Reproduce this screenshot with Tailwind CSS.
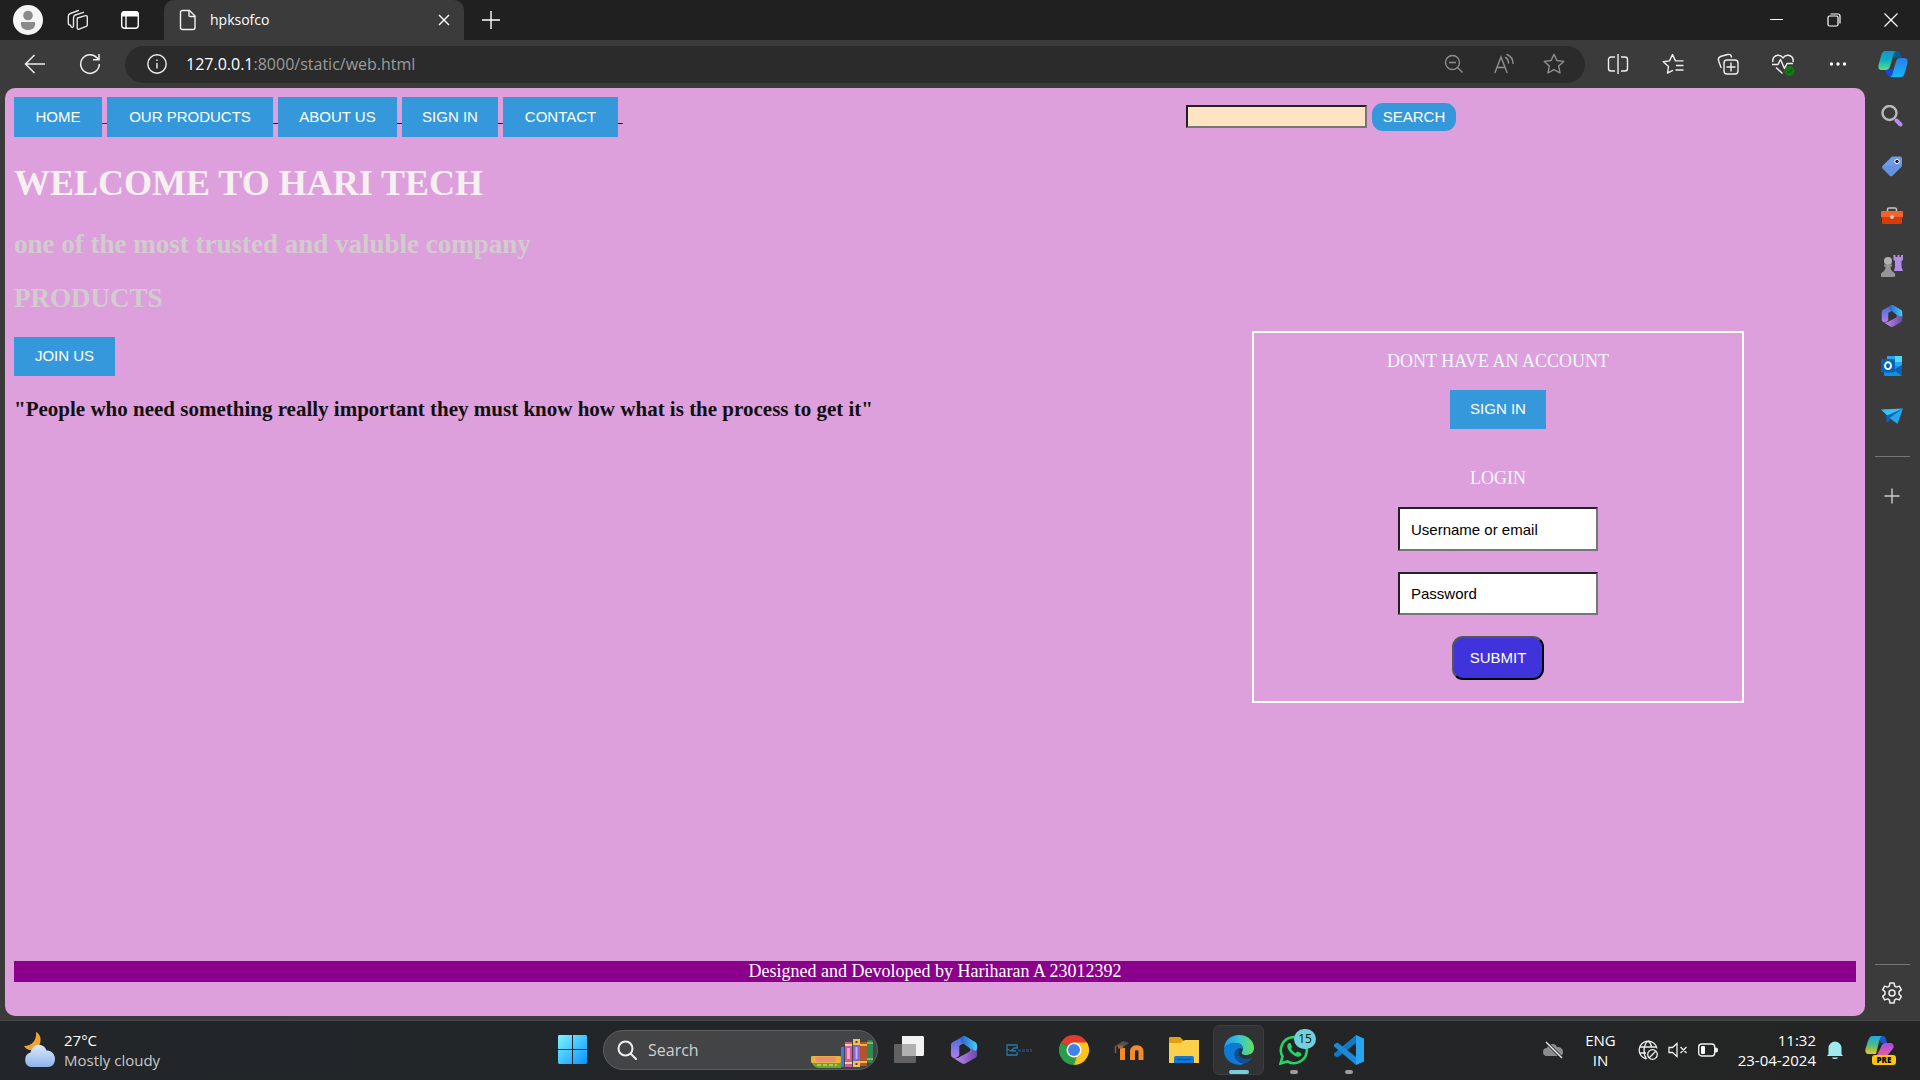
<!DOCTYPE html>
<html lang="en">
<head>
<meta charset="utf-8">
<title>hpksofco</title>
<script src="https://cdn.jsdelivr.net/npm/@tailwindcss/browser@4"></script>
</head>
<body class="flex h-screen flex-col overflow-hidden bg-[#3b3b3b] font-['Open_Sans',sans-serif] text-white">

<!-- Title bar -->
<header class="flex h-10 shrink-0 items-center bg-[#202020]">
  <div class="flex w-[164px] shrink-0 items-center">
    <button aria-label="Profile" class="ml-[13px]"><svg class="size-[30px]" viewBox="0 0 30 30"><circle cx="15" cy="15" r="15" fill="#f5f5f5"/><circle cx="15" cy="10.5" r="4.8" fill="#8a8a8a"/><path d="M8 17h14c1 6-3 8-7 8s-8-2-7-8z" fill="#8a8a8a"/></svg></button>
    <button aria-label="Workspaces" class="ml-6"><svg class="size-[22px]" viewBox="0 0 22 22" fill="none" stroke="#e6e6e6" stroke-width="1.4" stroke-linejoin="round" stroke-linecap="round"><path d="M10.500 9l8-2.300c1-.3 1.800.2 1.800 1.200v8c0 .8-.4 1.200-1.100 1.500l-7 2.800c-1 .4-2-.1-2-1.300v-8c0-1 0-1.600.3-1.900z"/><path d="M6.500 17.500V9c0-1.500.5-2.500 1.800-3L16.500 3.300M3 16c-1.200 0-1.700-.8-1.700-1.900V7.500c0-1.500.6-2.500 2-3L11.500 1.500M5.500 18.500c-1-.2-1.800-1-1.800-2"/></svg></button>
    <button aria-label="Tab actions" class="ml-[31px]"><svg class="size-5" viewBox="0 0 20 20"><rect x="1.700" y="1.700" width="16.600" height="16.600" rx="3" fill="none" stroke="#fff" stroke-width="1.400"/><path d="M1.700 6.500V4a3 3 0 0 1 3-3h11a3 3 0 0 1 3 3v2.500z" fill="#fff"/><path d="M6 6v12" stroke="#fff" stroke-width="1.400"/></svg></button>
  </div>
  <div class="flex h-10 w-[300px] items-center rounded-t-[10px] bg-[#3b3b3b] px-3">
    <svg class="h-6 w-6" viewBox="0 0 24 24" fill="none" stroke="#f2f2f2" stroke-width="1.400" stroke-linejoin="round"><path d="M6.500 2.500h7l5.500 5.500v11.500a2 2 0 0 1-2 2H6.500a2 2 0 0 1-2-2v-15a2 2 0 0 1 2-2z"/><path d="M13 3v4.500a1 1 0 0 0 1 1h5"/></svg>
    <span class="ml-[10px] grow text-sm">hpksofco</span>
    <button aria-label="Close tab" class="mr-[2px]"><svg class="size-3" viewBox="0 0 12 12" stroke="#fff" stroke-width="1.400"><path d="M1 1l10 10M11 1L1 11"/></svg></button>
  </div>
  <button aria-label="New tab" class="ml-[18px]"><svg class="size-[18px]" viewBox="0 0 18 18" stroke="#fff" stroke-width="1.400"><path d="M9 0v18M0 9h18"/></svg></button>
  <div class="ml-auto flex items-center">
    <button aria-label="Minimize" class="flex w-[57px] justify-center"><svg class="size-[14px]" viewBox="0 0 14 14" stroke="#fff"><path d="M0 6.500h13"/></svg></button>
    <button aria-label="Restore" class="flex w-[57px] justify-center"><svg class="size-[14px]" viewBox="0 0 14 14" fill="none" stroke="#fff" stroke-width="1.200"><rect x="1" y="3" width="10" height="10" rx="1.500"/><path d="M3.500 1H11a2 2 0 0 1 2 2v7.500"/></svg></button>
    <button aria-label="Close" class="flex w-[58px] justify-center"><svg class="size-[14px]" viewBox="0 0 14 14" stroke="#fff" stroke-width="1.200"><path d="M.5.5l13 13M13.500.5l-13 13"/></svg></button>
  </div>
</header>

<!-- Toolbar -->
<div class="flex h-12 shrink-0 items-center">
  <button aria-label="Back" class="ml-6"><svg class="size-[22px]" viewBox="0 0 22 22" fill="none" stroke="#eee" stroke-width="1.500"><path d="M21 11H1.500M10.500 2L1.500 11l9 9"/></svg></button>
  <button aria-label="Refresh" class="ml-[33px]"><svg class="size-[22px]" viewBox="0 0 22 22" fill="none" stroke="#eee" stroke-width="1.500"><path d="M20.300 11a9.300 9.300 0 1 1-2.500-6.300L20 6.500M20 1v5.700h-6"/></svg></button>
  <div class="ml-6 flex h-[37px] grow items-center rounded-full bg-[#2b2b2b] pr-5 pl-[22px]">
    <svg class="size-5 shrink-0" viewBox="0 0 20 20" fill="none" stroke="#eee" stroke-width="1.400"><circle cx="10" cy="10" r="9.200"/><path d="M10 9v5.500M10 5.500v1.600"/></svg>
    <div class="ml-[19px] grow text-base text-[#9c9c9c]"><span class="text-white">127.0.0.1</span>:8000/static/web.html</div>
    <div class="flex items-center gap-[28px]">
      <button aria-label="Zoom out"><svg class="size-[22px]" viewBox="0 0 22 22" fill="none" stroke="#8f8f8f" stroke-width="1.400"><circle cx="9.500" cy="9.500" r="7"/><path d="M6 9.500h7M14.500 14.500l5 5"/></svg></button>
      <button aria-label="Read aloud"><svg class="size-[22px]" viewBox="0 0 22 22" fill="none" stroke="#8f8f8f" stroke-width="1.400" stroke-linecap="round"><path d="M2 19.500L8 4l6 15.500M4 14.500h8M12.500 4.500c2 1 3 3 3 5.500M14 1.500c3.500 1.500 6 4.500 6 9"/></svg></button>
      <button aria-label="Add favorite"><svg class="size-[22px]" viewBox="0 0 22 22" fill="none" stroke="#8f8f8f" stroke-width="1.400" stroke-linejoin="round"><path d="M11 1.300l2.900 6.200 6.800.9-5 4.700 1.300 6.900-6-3.400L5 20l1.300-6.900-5-4.700 6.800-.9z"/></svg></button>
    </div>
  </div>
  <div class="flex items-center pl-[5px] *:flex *:w-[55px] *:justify-center">
    <button aria-label="Split screen"><svg class="size-[22px]" viewBox="0 0 22 22" fill="none" stroke="#eee" stroke-width="1.400"><path d="M8 4H4a2.500 2.500 0 0 0-2.500 2.500v9A2.500 2.500 0 0 0 4 18h4M14 4h4a2.500 2.500 0 0 1 2.500 2.500v9A2.500 2.500 0 0 1 18 18h-4M11 1v20"/></svg></button>
    <button aria-label="Favorites"><svg class="size-[22px]" viewBox="0 0 22 22" fill="none" stroke="#eee" stroke-width="1.400" stroke-linejoin="round"><path d="M11 17.300L5.500 20l1-6.500L1.200 8.800l6.300-.9L10.500 1.500l3 6.400h8M14 12.500h7.500M13.500 17h8"/></svg></button>
    <button aria-label="Collections"><svg class="size-[22px]" viewBox="0 0 22 22" fill="none" stroke="#eee" stroke-width="1.400" stroke-linecap="round"><rect x="7" y="7" width="14" height="14" rx="3"/><path d="M14 10v8M10 14h8M4 14.500L1.500 7.500C1 5.500 1.500 4.500 3.500 3.500l7-2c2-.5 3.500.2 4 2.500"/></svg></button>
    <button aria-label="Browser essentials"><svg class="size-6" viewBox="0 0 24 24" fill="none" stroke="#eee" stroke-width="1.500" stroke-linejoin="round"><path d="M2 10c-1-4 2-7 5.500-6.700C10 3.500 11.500 5 12 6c.5-1 2-2.500 4.500-2.700C20 3 23 6 22 10M1 12.500h6l2.500-5 4 9 2.500-5h6M5 15.500l6.500 6"/><circle cx="18.500" cy="19" r="5" fill="#107c10" stroke="none"/><path d="M16.300 19l1.700 1.700 2.800-3.200" stroke="#0b4d0b" stroke-width="1.200"/></svg></button>
    <button aria-label="Settings and more"><svg class="size-5" viewBox="0 0 20 20" fill="#fff"><circle cx="3.500" cy="10" r="1.700"/><circle cx="10" cy="10" r="1.700"/><circle cx="16.500" cy="10" r="1.700"/></svg></button>
    <button aria-label="Copilot"><svg class="size-[30px]" viewBox="0 0 30 30"><defs><linearGradient id="cp1" x2="0" y2="1"><stop stop-color="#1093d8"/><stop offset=".5" stop-color="#0fb0bf"/><stop offset="1" stop-color="#5fe08a"/></linearGradient><linearGradient id="cp2" x2="0" y2="1"><stop stop-color="#2b7cf0"/><stop offset="1" stop-color="#12b8f5"/></linearGradient></defs><path d="M14 2h5c2.500 0 3.500 3 4.500 7H16z" fill="#0b5a86"/><path d="M7 21l9-1-2 8h-1c-3 0-5-3-6-7z" fill="#1a45d8"/><path d="M7.500 2H18c-2 1-2.500 3-3 5l-3 10.500c-.8 2.500-2 3.500-4.500 3.500H4c-3 0-4-2-3.500-5L3 7c.8-3 2-5 4.500-5z" fill="url(#cp1)"/><path d="M22.500 28H12c2-1 2.500-3 3-5l3-10.500C18.800 10 20 9 22.500 9H26c3 0 4 2 3.500 5L27 23c-.8 3-2 5-4.500 5z" fill="url(#cp2)"/></svg></button>
  </div>
</div>

<div class="flex min-h-0 grow">
  <!-- Web page -->
  <main class="mb-1 ml-[5px] flex grow flex-col rounded-[10px] bg-[#dda0dd] p-[9px] font-['Liberation_Sans',Arial,sans-serif] text-[15px]">
    <div class="flex items-start justify-between">
      <nav class="flex text-center leading-10">
        <a href="#" class="flex"><span class="w-[88px] bg-[#3498db]">HOME</span><span class="h-[27px] w-[5px] border-b border-[#551a8b]"></span></a>
        <a href="#" class="flex"><span class="w-[166px] bg-[#3498db]">OUR PRODUCTS</span><span class="h-[27px] w-[5px] border-b border-[#0000ee]"></span></a>
        <a href="#" class="flex"><span class="w-[119px] bg-[#3498db]">ABOUT US</span><span class="h-[27px] w-[5px] border-b border-[#0000ee]"></span></a>
        <a href="#" class="flex"><span class="w-[96px] bg-[#3498db]">SIGN IN</span><span class="h-[27px] w-[5px] border-b border-[#0000ee]"></span></a>
        <a href="#" class="flex"><span class="w-[115px] bg-[#3498db]">CONTACT</span><span class="h-[27px] w-[5px] border-b border-[#0000ee]"></span></a>
      </nav>
      <form class="mt-[6px] mr-[400px] flex items-start gap-[5px]">
        <input type="text" aria-label="Search the site" class="mt-[2px] h-[23px] w-[181px] border-2 border-t-[#222] border-r-[#767676] border-b-[#767676] border-l-[#222] bg-[#ffe4c4] px-1 text-black">
        <button type="button" class="h-7 w-[84px] rounded-[11px] bg-[#3498db]">SEARCH</button>
      </form>
    </div>

    <div class="flex items-start justify-between">
      <section class="flex flex-col items-start font-['Liberation_Serif','Times_New_Roman',serif] font-bold">
        <h1 class="mt-[26px] text-[36px] leading-10 text-[#f7f0f0]">WELCOME TO HARI TECH</h1>
        <h2 class="mt-[26px] text-[27px] leading-[30px] text-[#d1cdcd]">one of the most trusted and valuble company</h2>
        <h2 class="mt-6 text-[27px] leading-[30px] text-[#d1cdcd]">PRODUCTS</h2>
        <button class="mt-6 h-[39px] w-[101px] bg-[#3498db] font-['Liberation_Sans',Arial,sans-serif] text-[15px] font-normal">JOIN US</button>
        <h3 class="mt-[21px] text-[21px] leading-6 text-[#111]">"People who need something really important they must know how what is the process to get it"</h3>
      </section>
      <form class="mt-[194px] mr-28 flex w-[492px] flex-col items-center border-2 border-white pt-[18px] pb-[21px]">
        <p class="font-['Liberation_Serif','Times_New_Roman',serif] text-[18px] leading-5 text-[#f0f8ff]">DONT HAVE AN ACCOUNT</p>
        <button type="button" class="mt-[19px] h-[39px] w-[96px] bg-[#3498db]">SIGN IN</button>
        <p class="mt-[39px] font-['Liberation_Serif','Times_New_Roman',serif] text-[18px] leading-5 text-[#f0f8ff]">LOGIN</p>
        <input type="text" aria-label="Username or email" placeholder="Username or email" class="mt-[19px] h-11 w-[200px] border-2 border-t-[#222] border-r-[#767676] border-b-[#767676] border-l-[#222] bg-white px-[11px] text-black placeholder:text-black">
        <input type="password" aria-label="Password" placeholder="Password" class="mt-[21px] h-[43px] w-[200px] border-2 border-t-[#222] border-r-[#767676] border-b-[#767676] border-l-[#222] bg-white px-[11px] text-black placeholder:text-black">
        <button type="button" class="mt-[21px] h-11 w-[92px] rounded-[11px] border-2 border-t-[#555] border-r-black border-b-black border-l-[#555] bg-[#4133dc]">SUBMIT</button>
      </form>
    </div>

    <footer class="mt-auto mb-[25px] bg-[#8b008b] text-center font-['Liberation_Serif','Times_New_Roman',serif] text-[18px] leading-[21px]">Designed and Devoloped by Hariharan A 23012392</footer>
  </main>

  <!-- Sidebar -->
  <aside class="flex w-[55px] shrink-0 flex-col items-center pt-[3px] pr-px *:flex *:shrink-0 *:items-center *:justify-center">
    <button aria-label="Search" class="h-[50px]"><svg class="size-[22px]" viewBox="0 0 22 22" fill="none"><circle cx="8.500" cy="8" r="7" stroke="#b9b9b9" stroke-width="2.400"/><path d="M15.500 15.500l4 4" stroke="#b98af0" stroke-width="4" stroke-linecap="round"/></svg></button>
    <button aria-label="Shopping" class="h-[50px]"><svg class="size-[22px]" viewBox="0 0 22 22"><path d="M11 1.500h8a2 2 0 0 1 2 2V11L11.500 20.500a2 2 0 0 1-2.800 0l-7-7a2 2 0 0 1 0-2.800z" fill="#6f9be8"/><path d="M1.700 11.500L21 9v2L11.500 20.500a2 2 0 0 1-2.800 0l-7-7z" fill="#6591e2"/><circle cx="16" cy="6.500" r="2.200" fill="#222" stroke="#fff"/></svg></button>
    <button aria-label="Tools" class="h-[50px]"><svg class="size-[22px]" viewBox="0 0 22 22"><path d="M6.500 7V4.500A1.500 1.500 0 0 1 8 3h6a1.500 1.500 0 0 1 1.500 1.500V7" fill="none" stroke="#c9c9c9" stroke-width="1.500"/><rect y="6" width="22" height="6.500" rx="1" fill="#f4622a"/><path d="M1 12h20v5.500a1.500 1.500 0 0 1-1.500 1.500h-17A1.500 1.500 0 0 1 1 17.500z" fill="#d83b01"/><circle cx="11" cy="12" r="2" fill="#c9c9c9"/></svg></button>
    <button aria-label="Games" class="h-[50px]"><svg class="size-[22px]" viewBox="0 0 22 22"><path d="M12.500 0h2v2h2V0h2v2h1.500V0h2v5l-1.500 1v6l1.500 4h-9l1-4V6l-1.500-1z" fill="#b48be8"/><circle cx="7" cy="6" r="4" fill="#b0b0b0"/><path d="M3 9.500h8v2H9.500c0 3 1 4.500 4 6.500 1 1 1 3 0 4H.5c-1-1-1-3 0-4 3-2 4-3.500 4-6.500H3z" fill="#969696"/></svg></button>
    <button aria-label="Microsoft 365" class="h-[50px]"><svg class="size-[22px]" viewBox="0 0 28 30"><defs><linearGradient id="ma" x2="0" y2="1"><stop stop-color="#3d6fd8"/><stop offset="1" stop-color="#b47cec"/></linearGradient><linearGradient id="mb" x2="1"><stop stop-color="#2a62c8"/><stop offset="1" stop-color="#45cdf8"/></linearGradient><linearGradient id="mc" x2="1"><stop stop-color="#c48cf2"/><stop offset="1" stop-color="#6a4aa8"/></linearGradient></defs><path d="M14 0L2 6.500a3.500 3.500 0 0 0-2 3V20c0 2 1.500 3.500 3.500 3.500S9 22 9 20V10.500L18 5z" fill="url(#ma)"/><path d="M12 .7c1.500-.9 3-.9 4.500 0L26 6.500c1.300.8 2 2 2 3.500v8l-8-4.500-7-5.500c-2-1.500-4-2-1-7.300z" fill="url(#mb)"/><path d="M28 13v7c0 1.500-.7 2.700-2 3.500L16 29.300c-1.500.9-3 .9-4.500 0L3 24c4 0 6-1 8-2.500l7-4c2-1 3-1.500 3-4.500l5 3c1-.5 2-1.500 2-3z" fill="url(#mc)"/><path d="M9.500 11.500L14 9l5.500 3.500v4.500L12 21l-2.500-1.500z" fill="#333"/></svg></button>
    <button aria-label="Outlook" class="h-[50px]"><svg class="size-[22px]" viewBox="0 0 22 22"><rect x="6" y="1" width="15" height="13" fill="#28a8ea"/><path d="M14 1h7v6h-7z" fill="#50d9ff"/><path d="M3 11h18v9a1 1 0 0 1-1 1H4a1 1 0 0 1-1-1z" fill="#1490df"/><path d="M21 10v11l-8-6z" fill="#0a5fae"/><rect y="4" width="14" height="13.500" rx="1.200" fill="#0364b8"/><ellipse cx="7" cy="10.700" rx="3" ry="3.400" fill="none" stroke="#fff" stroke-width="1.900"/></svg></button>
    <button aria-label="Drop" class="h-[50px]"><svg class="size-[22px]" viewBox="0 0 22 22"><path d="M0 4.500l22-1-14 9z" fill="#35c1f5"/><path d="M22 3.500L5 11l1 7 4-4z" fill="#0b62b5"/><path d="M22 3.500L8.500 13l8 6z" fill="#25a5f0"/></svg></button>
    <div class="mt-[15px] h-px w-[35px] bg-[#767676]"></div>
    <button aria-label="Add app" class="mt-[31px]"><svg class="size-4" viewBox="0 0 16 16" stroke="#ccc" stroke-width="1.400"><path d="M8 .5v15M.5 8h15"/></svg></button>
    <div class="mt-auto h-px w-[35px] bg-[#767676]"></div>
    <button aria-label="Sidebar settings" class="mt-[17px] mb-4"><svg class="size-[22px]" viewBox="0 0 22 22" fill="none" stroke="#eee" stroke-width="1.500" stroke-linejoin="round"><circle cx="11" cy="11" r="3"/><path d="M9 1h4l.7 3.200 1.600.9 3-1 2 3.500-2.300 2.200v2.400l2.300 2.200-2 3.500-3-1-1.600.9L13 21H9l-.7-3.200-1.600-.9-3 1-2-3.500L4 12.200V9.800L1.700 7.600l2-3.500 3 1 1.600-.9z"/></svg></button>
  </aside>
</div>

<!-- Taskbar -->
<footer class="grid h-[60px] shrink-0 grid-cols-[1fr_auto_1fr] items-center border-t border-[#45494b] bg-linear-to-r from-[#22262a] via-[#232527] to-[#242424] pb-[2px] text-[15px] leading-5">
  <button class="flex items-center pl-6 text-left">
    <svg class="h-9 w-8" viewBox="0 0 32 36"><defs><linearGradient id="cl" x2="0" y2="1"><stop stop-color="#dbe8fb"/><stop offset="1" stop-color="#8eb5ec"/></linearGradient></defs><path d="M12 0c8 4 5 17-4 18-4 .5-6-1-8-4 8 0 13-6 12-14z" fill="#f2a52c"/><path d="M7 35a7.500 7.500 0 0 1-.5-14.500C8 15 12 12 16.500 13c3 .5 5 2.500 6 5.500C27 18 31 22 31 27c0 5-3 8-7 8z" fill="url(#cl)"/></svg>
    <span class="ml-2 flex flex-col"><span>27°C</span><span class="text-[#c8c8c8]">Mostly cloudy</span></span>
  </button>

  <div class="flex h-[50px] items-center pl-px *:flex *:h-[50px] *:w-[55px] *:items-center *:justify-center">
    <button aria-label="Start"><svg class="size-[29px]" viewBox="0 0 29 29"><defs><linearGradient id="win" x2="1" y2="1"><stop stop-color="#7cf4ff"/><stop offset="1" stop-color="#0a94ff"/></linearGradient></defs><path d="M1 0h13v14H0V1zM15 0h13l1 1v13H15zM0 15h14v14H1l-1-1zM15 15h14v13l-1 1H15z" fill="url(#win)"/></svg></button>
    <label class="relative mx-[3px] h-10! w-[275px]! justify-start! overflow-hidden rounded-full border border-[#5c5e60] bg-[#434446] pl-[13px]">
      <svg class="size-5 shrink-0" viewBox="0 0 20 20" fill="none" stroke="#eee" stroke-width="2"><circle cx="8.500" cy="8.500" r="7"/><path d="M13.500 13.500l5.500 5.500" stroke-linecap="round"/></svg>
      <input type="text" aria-label="Search" placeholder="Search" class="ml-[11px] w-[120px] text-base placeholder:text-[#d0d0d0]">
      <svg class="ml-auto h-[38px] w-[66px] shrink-0" viewBox="0 0 66 38"><rect x="0" y="25" width="30" height="7" rx="1" fill="#e8b13a"/><rect x="5" y="26" width="20" height="5" rx="2" fill="#f08a80"/><path d="M1 32h29v5H9c-4 0-7-2-8-5z" fill="#6aa52c"/><path d="M6 34h20" stroke="#b8dc5a" stroke-width="1.500" stroke-dasharray="4 2"/><rect x="30" y="16" width="3" height="20" fill="#3a7be0"/><rect x="34" y="11" width="7" height="25" fill="#d8559a"/><path d="M34 14h7M34 32h7" stroke="#f7d488" stroke-width="2"/><rect x="36" y="17" width="3" height="11" fill="#f3a6cc"/><rect x="42" y="8" width="7" height="28" fill="#8a62d8"/><path d="M42 8h7v6h-7zM42 30h7v6h-7z" fill="#f2c24a"/><path d="M45.500 16v12" stroke="#c8aef2" stroke-width="2"/><path d="M44.500 11h2M44.500 33h2" stroke="#4a3aa8" stroke-width="2"/><rect x="49" y="11" width="7" height="24" fill="#b0562a"/><path d="M49 14h7M49 31h7" stroke="#f2b24a" stroke-width="2"/><rect x="56" y="9" width="6" height="23" rx="2" fill="#2e8a55"/><path d="M56 12h6M56 28h6" stroke="#e8d46a"/></svg>
    </label>
    <button aria-label="Task view"><svg class="size-[30px]" viewBox="0 0 30 30"><path d="M8 1h21l1 1v18l-1 1H8z" fill="#f2f2f2"/><rect y="9" width="22" height="19" rx="1" fill="#707070" fill-opacity=".8"/><path d="M8 9h14v12H8z" fill="#b0b0b0"/></svg></button>
    <button aria-label="Microsoft 365"><svg class="h-7 w-[26px]" viewBox="0 0 28 30"><path d="M14 0L2 6.500a3.500 3.500 0 0 0-2 3V20c0 2 1.500 3.500 3.500 3.500S9 22 9 20V10.500L18 5z" fill="url(#ma)"/><path d="M12 .7c1.500-.9 3-.9 4.500 0L26 6.500c1.300.8 2 2 2 3.500v8l-8-4.500-7-5.500c-2-1.500-4-2-1-7.300z" fill="url(#mb)"/><path d="M28 13v7c0 1.500-.7 2.700-2 3.500L16 29.300c-1.500.9-3 .9-4.500 0L3 24c4 0 6-1 8-2.500l7-4c2-1 3-1.500 3-4.500l5 3c1-.5 2-1.500 2-3z" fill="url(#mc)"/><path d="M9.500 11.500L14 9l5.500 3.500v4.500L12 21l-2.500-1.500z" fill="#242628"/></svg></button>
    <button aria-label="Evolve"><svg class="h-3 w-[26px]" viewBox="0 0 26 12" fill="none"><path d="M11 4V1H1v10h10V8M1 5l4 2 3-3h4M5 7h5" stroke="#2878a8" stroke-width="1.300"/><path d="M12 6.500h14" stroke="#2a3e62" stroke-width="3" stroke-dasharray="3 1"/></svg></button>
    <button aria-label="Chrome"><svg class="size-[30px]" viewBox="0 0 30 30"><path d="M15 15L2 7.500A15 15 0 0 1 28 7.500z" fill="#e33b2e"/><path d="M15 15L28 7.500A15 15 0 0 1 15 30z" fill="#fcc31e"/><path d="M15 7.500h13l1 4-14 5z" fill="#fcc31e"/><path d="M2 7.500A15 15 0 0 0 15 30l6.500-11.300L15 15z" fill="#2d9c4a"/><path d="M15 30l7-12-2-3z" fill="#fcc31e"/><circle cx="15" cy="15" r="7.500" fill="#fff"/><circle cx="15" cy="15" r="6" fill="#3f82ec"/></svg></button>
    <button aria-label="Moodle"><svg class="size-[30px]" viewBox="0 0 30 30" fill="none"><path d="M1 11L9 6l6 2-7 5z" fill="#54504e"/><path d="M1.500 11v7" stroke="#8a5a3a" stroke-width="1.500"/><path d="M8.500 25V13M18.500 25v-9c0-4.500 8.500-4.500 8.500 0v9" stroke="#f28a2e" stroke-width="5"/><path d="M4 12h5" stroke="#a86030" stroke-width="3"/></svg></button>
    <button aria-label="File Explorer"><svg class="size-[30px]" viewBox="0 0 30 30"><path d="M0 3a1 1 0 0 1 1-1h10l4 4h14a1 1 0 0 1 1 1v5H0z" fill="#e0a010"/><path d="M0 8h11l5-3h14v23H0z" fill="#fdd04a"/><path d="M5 28v-5a2 2 0 0 1 2-2h16a2 2 0 0 1 2 2v5z" fill="#1577cf"/><path d="M8 24.500h14" stroke="#0c4f96" stroke-width="1.200"/></svg></button>
    <button aria-label="Edge" class="relative"><span class="absolute inset-x-[2px] inset-y-0 rounded-md border border-[#3c3e40] bg-[#303234]"></span><svg class="relative size-[30px]" viewBox="0 0 30 30"><defs><linearGradient id="ed" x2="1"><stop stop-color="#1d9be8"/><stop offset=".5" stop-color="#35c6d8"/><stop offset="1" stop-color="#66e052"/></linearGradient></defs><path d="M0 13C1 5 7 0 15 0c9 0 15 6 15 13 0 5-4 7-8 7-3 0-5-1-4-3 3-5-1-9-6-9-5 0-9 2-12 5z" fill="url(#ed)"/><path d="M0 14C2 9 7 7 12 8c4 0 7 3 7 6-3-2-8 0-8 5 0 6 5 10 10 9.500C12 33-1 26 0 14z" fill="#0d7bd6"/><path d="M11 16c-3 8 5 13 11 12 3-1 5-3 6.500-5.500-6 3-14 1-14-4.500 0-1 .3-2 1-3-2-.5-4 0-4.500 1z" fill="#0f4f9c"/></svg><span class="absolute bottom-px h-1 w-5 rounded-full bg-[#70d0dc]"></span></button>
    <button aria-label="WhatsApp" class="relative"><svg class="size-[30px]" viewBox="0 0 30 30"><path d="M1.500 28.500l2-7A13 13 0 1 1 8.500 26.500z" fill="none" stroke="#25d366" stroke-width="2.600"/><path d="M10 8c-3 2-2 6 2 10s8 5 10.500 2l-.5-2-3.500-1.500-2 1.500c-2-1-3.500-2.500-4.500-4.500L13 12l-1.500-4z" fill="#25d366"/></svg><span class="absolute top-1 right-[5px] h-5 w-[22px] rounded-full bg-[#70d0dc] text-xs leading-5 text-[#111]">15</span><span class="absolute bottom-px h-1 w-2 rounded-full bg-[#9c9c9c]"></span></button>
    <button aria-label="Visual Studio Code" class="relative"><svg class="size-[30px]" viewBox="0 0 30 30"><path d="M22 0v8L3.500 22.500 0 20.500v-2z" fill="#0e7ac4"/><path d="M3.500 7.500L0 9.500v2L22 30v-8z" fill="#1a8ad6"/><path d="M22 0l8 3.500v23L22 30z" fill="#28a4f0"/></svg><span class="absolute bottom-px h-1 w-2 rounded-full bg-[#9c9c9c]"></span></button>
  </div>

  <div class="flex items-center justify-end pr-[25px]">
    <svg class="h-[18px] w-5" viewBox="0 0 20 18"><path d="M4 15a4 4 0 0 1 0-8c1-4 8-6 10-1 4 0 6 2 6 5s-2 4-4 4z" fill="#8c8c8c"/><path d="M3 1l16 16" stroke="#242424" stroke-width="3"/><path d="M3 1l16 16" stroke="#fff" stroke-width="1.300"/></svg>
    <button class="ml-[22px] text-center">ENG<br>IN</button>
    <button aria-label="Network, volume and battery" class="ml-[22px] flex items-center gap-[10px]">
      <svg class="size-5" viewBox="0 0 20 20" fill="none" stroke="#eee" stroke-width="1.300"><path d="M8.500 19A9 9 0 1 1 19 8.500M1.500 7h16.500M1.500 13H8M10 1C5 5 5 14 8.500 19M10 1c2 1.500 3.500 4 3.800 6.500"/><circle cx="14.500" cy="14.500" r="4.800"/><path d="M11 18l7-7"/></svg>
      <svg class="size-5" viewBox="0 0 20 20" fill="none" stroke="#eee" stroke-width="1.300"><path d="M1 7.500h3.500L9 3.500v13L4.500 12.500H1zM12.500 7l6 6M18.500 7l-6 6"/></svg>
      <svg class="h-[14px] w-5" viewBox="0 0 20 14"><rect x=".7" y="1" width="16" height="12" rx="3" fill="none" stroke="#eee" stroke-width="1.400"/><rect x="3" y="3" width="4" height="8" rx="1" fill="#fff"/><path d="M17 4.500h1a2 2 0 0 1 2 2v1a2 2 0 0 1-2 2h-1z" fill="#eee"/></svg>
    </button>
    <button class="ml-5 text-right">11:32<br>23-04-2024</button>
    <svg class="ml-[11px] h-5 w-4" viewBox="0 0 16 20"><path d="M1.500 14V8a6.500 6.500 0 0 1 13 0v6l1.500 2H0z" fill="#9debee"/><path d="M5 17.500h6c-.5 2-5.500 2-6 0z" fill="#9debee"/></svg>
    <button aria-label="Copilot preview" class="relative ml-[22px]"><svg class="h-[30px] w-[30px]" viewBox="0 0 30 30"><defs><linearGradient id="pr" x2="0" y2="1"><stop stop-color="#1ea7f0"/><stop offset=".5" stop-color="#4dbb7c"/><stop offset="1" stop-color="#f2c21e"/></linearGradient><linearGradient id="pk" x2="0" y2="1"><stop stop-color="#a050e8"/><stop offset="1" stop-color="#f0608a"/></linearGradient></defs><path d="M13 1h5c3 0 3 3 4 7h-6z" fill="#1b55c8"/><path d="M8 1h9c-2 1-2 3-3 6l-3 12H4c-3 0-4-2-3.500-5L3 6c1-3 2-5 5-5z" fill="url(#pr)"/><path d="M21 22H11l5-10c1-3 2-4 4-4h5c3 0 4 2 3.500 5z" fill="url(#pk)"/></svg><span class="absolute -right-px bottom-0 h-[10px] w-6 rounded-[3px] bg-[#ffc60a] text-[8px] leading-[10px] font-extrabold text-black">PRE</span></button>
  </div>
</footer>
</body>
</html>
